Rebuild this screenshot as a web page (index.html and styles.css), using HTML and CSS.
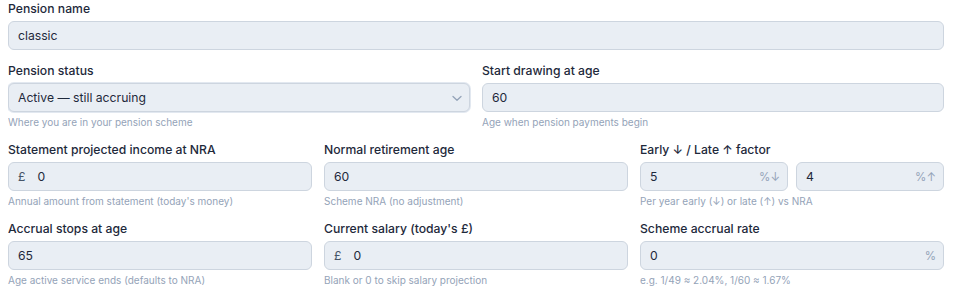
FILE: index.html
```html
<!DOCTYPE html>
<html lang="en">
<head>
  <meta charset="UTF-8">
  <meta name="viewport" content="width=device-width, initial-scale=1.0">
  <title>Pension details</title>
  <link rel="stylesheet" href="styles.css">
</head>
<body>
<form class="pension-form">
  <div class="row cols-1">
    <div class="field">
      <label for="pension-name">Pension name</label>
      <div class="control">
        <input type="text" id="pension-name" value="classic">
      </div>
    </div>
  </div>

  <div class="row cols-2">
    <div class="field">
      <label for="pension-status">Pension status</label>
      <div class="control select">
        <select id="pension-status">
          <option>Active — still accruing</option>
          <option>Deferred</option>
          <option>In payment</option>
        </select>
        <svg class="chevron" width="12" height="12" viewBox="0 0 12 12"><path d="M2 4.5 6 8.2l4-3.7" fill="none" stroke="#94a3b8" stroke-width="1.3" stroke-linecap="round" stroke-linejoin="round"/></svg>
      </div>
      <p class="hint">Where you are in your pension scheme</p>
    </div>
    <div class="field">
      <label for="start-age">Start drawing at age</label>
      <div class="control">
        <input type="text" id="start-age" value="60">
      </div>
      <p class="hint">Age when pension payments begin</p>
    </div>
  </div>

  <div class="row cols-3">
    <div class="field">
      <label for="projected-income">Statement projected income at NRA</label>
      <div class="control">
        <span class="prefix">£</span>
        <input type="text" id="projected-income" value="0">
      </div>
      <p class="hint">Annual amount from statement (today's money)</p>
    </div>
    <div class="field">
      <label for="nra">Normal retirement age</label>
      <div class="control">
        <input type="text" id="nra" value="60">
      </div>
      <p class="hint">Scheme NRA (no adjustment)</p>
    </div>
    <div class="field">
      <label for="early-factor">Early ↓ / Late ↑ factor</label>
      <div class="pair">
        <div class="control">
          <input type="text" id="early-factor" value="5">
          <span class="suffix">%↓</span>
        </div>
        <div class="control">
          <input type="text" id="late-factor" value="4">
          <span class="suffix">%↑</span>
        </div>
      </div>
      <p class="hint">Per year early (↓) or late (↑) vs NRA</p>
    </div>
  </div>

  <div class="row cols-3">
    <div class="field">
      <label for="accrual-stops">Accrual stops at age</label>
      <div class="control">
        <input type="text" id="accrual-stops" value="65">
      </div>
      <p class="hint">Age active service ends (defaults to NRA)</p>
    </div>
    <div class="field">
      <label for="salary">Current salary (today's £)</label>
      <div class="control">
        <span class="prefix">£</span>
        <input type="text" id="salary" value="0">
      </div>
      <p class="hint">Blank or 0 to skip salary projection</p>
    </div>
    <div class="field">
      <label for="accrual-rate">Scheme accrual rate</label>
      <div class="control">
        <input type="text" id="accrual-rate" value="0">
        <span class="suffix">%</span>
      </div>
      <p class="hint">e.g. 1/49 ≈ 2.04%, 1/60 ≈ 1.67%</p>
    </div>
  </div>
</form>
</body>
</html>
```

FILE: styles.css
```css
body {
  margin: 0 9px 0 8px;
  font-family: Inter, "Noto Sans", sans-serif;
  background-color: #fff;
  color: #1e293b;
}
.pension-form {
  display: flex;
  flex-direction: column;
  gap: 12px;
}
.row {
  display: grid;
  gap: 12px;
}
.cols-1 {
  grid-template-columns: minmax(0, 1fr);
}
.cols-2 {
  grid-template-columns: repeat(2, minmax(0, 1fr));
}
.cols-3 {
  grid-template-columns: repeat(3, minmax(0, 1fr));
}
.field {
  min-width: 0;
}
.field label {
  display: block;
  font-size: 12.2px;
  line-height: 18px;
  font-weight: 500;
  color: #1e293b;
  margin-bottom: 3px;
}
.control {
  display: flex;
  align-items: center;
  height: 29px;
  box-sizing: border-box;
  padding: 0 7px 0 9px;
  background-color: #e9eef4;
  border: 1px solid #cdd5df;
  border-radius: 6px;
  position: relative;
  min-width: 0;
}
.control input,
.control select {
  flex: 1;
  width: 100%;
  min-width: 0;
  border: none;
  background: transparent;
  font-family: inherit;
  font-size: 12.2px;
  color: #1e293b;
  padding: 0;
  outline: none;
}
.control select {
  appearance: none;
  -webkit-appearance: none;
  height: 100%;
}
.control.select {
  box-shadow: 0 0 0 1px #e2e8f0;
}
.chevron {
  position: absolute;
  right: 6px;
  top: 8px;
  pointer-events: none;
}
.prefix {
  font-size: 12.2px;
  color: #475569;
  margin-right: 12px;
}
.suffix {
  font-size: 11.5px;
  color: #94a3b8;
  margin-left: 6px;
}
.pair {
  display: grid;
  grid-template-columns: repeat(2, minmax(0, 1fr));
  gap: 8px;
}
.hint {
  margin: 3px 0 0;
  font-size: 10px;
  line-height: 14px;
  color: #94a3b8;
}
```
